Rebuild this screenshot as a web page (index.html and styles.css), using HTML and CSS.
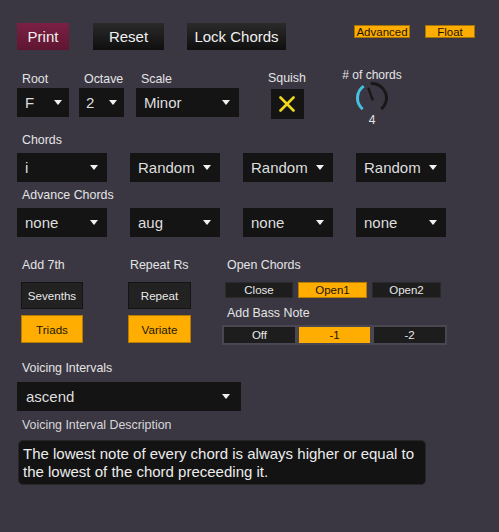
FILE: index.html
```html
<!DOCTYPE html>
<html>
<head>
<meta charset="utf-8">
<link rel="stylesheet" href="styles.css">
</head>
<body>
<div class="app">
  <div class="topbar">
    <div class="tbtn print">Print</div>
    <div class="tbtn dark reset">Reset</div>
    <div class="tbtn dark lock">Lock Chords</div>
    <div class="flags">
      <div class="flag adv">Advanced</div>
      <div class="flag flt">Float</div>
    </div>
  </div>

  <div class="params">
    <div class="col col-root">
      <div class="lbl">Root</div>
      <div class="dd"><span>F</span><i class="tri"></i></div>
    </div>
    <div class="col col-oct">
      <div class="lbl">Octave</div>
      <div class="dd"><span>2</span><i class="tri"></i></div>
    </div>
    <div class="col col-scale">
      <div class="lbl">Scale</div>
      <div class="dd"><span>Minor</span><i class="tri"></i></div>
    </div>
    <div class="col col-squish">
      <div class="lbl-c">Squish</div>
      <div class="squish">
        <svg width="16" height="16" viewBox="0 0 16 16"><path d="M1.5 1.5 L14.5 14.5 M14.5 1.5 L1.5 14.5" stroke="#f2d81c" stroke-width="2.6" stroke-linecap="round" fill="none"/></svg>
      </div>
    </div>
    <div class="col col-knob">
      <div class="lbl-k">#&nbsp;of chords</div>
      <svg class="knob" width="36" height="32" viewBox="0 0 36 32">
        <path d="M8.68 27.11 A14.5 14.5 0 0 1 9.68 4.12" stroke="#44c2e1" stroke-width="3" fill="none"/>
        <path d="M16.74 1.56 A14.5 14.5 0 0 1 27.32 27.11" stroke="#181818" stroke-width="3" fill="none"/>
        <path d="M18.4 17.4 L14.6 6.8" stroke="#181818" stroke-width="2.4" stroke-linecap="round"/>
      </svg>
      <div class="kval">4</div>
    </div>
  </div>

  <div class="lbl sec">Chords</div>
  <div class="ddrow">
    <div class="dd w90"><span>i</span><i class="tri"></i></div>
    <div class="dd w90"><span>Random</span><i class="tri"></i></div>
    <div class="dd w90"><span>Random</span><i class="tri"></i></div>
    <div class="dd w90"><span>Random</span><i class="tri"></i></div>
  </div>
  <div class="lbl sec2">Advance Chords</div>
  <div class="ddrow">
    <div class="dd w90"><span>none</span><i class="tri"></i></div>
    <div class="dd w90"><span>aug</span><i class="tri"></i></div>
    <div class="dd w90"><span>none</span><i class="tri"></i></div>
    <div class="dd w90"><span>none</span><i class="tri"></i></div>
  </div>

  <div class="opts">
    <div class="ocol o1">
      <div class="lbl">Add 7th</div>
      <div class="tog off first">Sevenths</div>
      <div class="tog on second">Triads</div>
    </div>
    <div class="ocol o2">
      <div class="lbl">Repeat Rs</div>
      <div class="tog off first">Repeat</div>
      <div class="tog on second">Variate</div>
    </div>
    <div class="ocol o3">
      <div class="lbl">Open Chords</div>
      <div class="seg">
        <div class="sbtn">Close</div>
        <div class="sbtn on">Open1</div>
        <div class="sbtn">Open2</div>
      </div>
      <div class="lbl bass-lbl">Add Bass Note</div>
      <div class="seg2">
        <div class="bbtn">Off</div>
        <div class="bbtn on">-1</div>
        <div class="bbtn">-2</div>
      </div>
    </div>
  </div>

  <div class="lbl vlbl">Voicing Intervals</div>
  <div class="dd voicing"><span>ascend</span><i class="tri"></i></div>
  <div class="lbl-s">Voicing Interval Description</div>
  <div class="desc">The lowest note of every chord is always higher or equal to the lowest of the chord preceeding it.</div>
</div>
</body>
</html>
```

FILE: styles.css
```css
* { box-sizing: border-box; }
html, body { margin: 0; padding: 0; }
body {
  background: #3a3743;
  width: 499px;
  height: 532px;
  overflow: hidden;
  font-family: "Liberation Sans", Arial, sans-serif;
  color: #e2e2e2;
}
.app { padding: 23px 24px 0 17px; }

.topbar { display: flex; align-items: flex-start; height: 27px; }
.tbtn {
  height: 27px;
  display: flex; align-items: center; justify-content: center;
  font-size: 15px; color: #f0f0f0;
}
.print { width: 52px; margin-right: 24px; background: linear-gradient(#7b2044, #5f1631); }
.dark { background: linear-gradient(#2a2a2a, #0f0f0f); }
.reset { width: 71px; margin-right: 23px; }
.lock { width: 99px; }
.flags { margin-left: auto; margin-top: 2px; display: flex; gap: 15px; }
.flag {
  height: 13px;
  background: #ffad00;
  border: 1px solid #a87400;
  color: #1a1400;
  font-size: 11.5px;
  display: flex; align-items: center; justify-content: center;
}
.adv { width: 56px; }
.flt { width: 50px; }

.lbl { font-size: 12.4px; line-height: 14px; padding-left: 5px; color: #e4e4e4; }
.params { display: flex; align-items: flex-start; margin-top: 22px; }
.col .lbl { margin-bottom: 2px; }
.dd {
  height: 29px;
  background: #141414;
  display: flex; align-items: center;
  padding: 0 9px 0 9px;
  font-size: 15px; color: #dedede;
}
.tri {
  margin-left: auto;
  width: 0; height: 0;
  border-left: 4.5px solid transparent;
  border-right: 4.5px solid transparent;
  border-top: 5px solid #f2f2f2;
}
.col-root { width: 52px; }
.col-root .dd { padding-left: 8px; padding-right: 7px; }
.col-oct { width: 45px; margin-left: 10px; }
.col-oct .dd { padding-left: 7px; padding-right: 7px; }
.col-scale { width: 103px; margin-left: 12px; }
.col-scale .dd { padding-left: 8px; }
.col-squish { width: 38px; margin-left: 29px; display: flex; flex-direction: column; align-items: center; margin-top: -1px; }
.lbl-c { font-size: 12.4px; line-height: 14px; color: #e4e4e4; }
.squish {
  margin-top: 4px;
  width: 33px; height: 30px;
  background: #141414;
  display: flex; align-items: center; justify-content: center;
}
.col-knob { width: 62px; margin-left: 35px; margin-top: -4px; display: flex; flex-direction: column; align-items: center; }
.lbl-k { font-size: 12px; line-height: 14px; color: #e4e4e4; white-space: nowrap; }
.knob { display: block; }
.kval { font-size: 12px; line-height: 12px; color: #e4e4e4; }

.sec { margin-top: 7px; }
.sec2 { margin-top: 6px; }
.ddrow { display: flex; gap: 23px; margin-top: 6px; }
.w90 { width: 90px; padding-left: 8px; }

.opts { display: flex; align-items: flex-start; margin-top: 21px; }
.ocol { display: flex; flex-direction: column; }
.o1 { width: 66px; }
.o1 .tog { margin-left: 4px; }
.o2 { margin-left: 45px; width: 63px; }
.o2 .lbl { padding-left: 2px; }
.o3 { margin-left: 31px; }
.tog {
  width: 62px;
  display: flex; align-items: center; justify-content: center;
  font-size: 11.6px;
  border: 1px solid #141414;
}
.o2 .tog { width: 63px; }
.tog.first { margin-top: 10px; height: 27px; }
.tog.second { margin-top: 6px; height: 28px; }
.tog.off { background: #222222; color: #e8e8e8; }
.tog.on { background: #ffad00; color: #201800; border-color: #b57c00; }

.seg { display: flex; gap: 5px; margin-top: 10px; margin-left: 3px; }
.sbtn {
  width: 69px; height: 16px;
  background: #1d1d1d;
  border: 1px solid #2a2a2a;
  display: flex; align-items: center; justify-content: center;
  font-size: 11.5px; color: #e8e8e8;
}
.sbtn:first-child { width: 68px; }
.sbtn.on { background: #ffad00; color: #1c1400; border-color: #b57c00; }
.bass-lbl { margin-top: 8px; }
.seg2 { display: flex; margin-top: 5px; }
.bbtn {
  width: 75px; height: 20px;
  background: #1d1d1d;
  border: 2px solid #4a4752;
  display: flex; align-items: center; justify-content: center;
  font-size: 11.5px; color: #e8e8e8;
}
.bbtn.on { background: #ffad00; color: #1c1400; }

.vlbl { margin-top: 16px; }
.voicing { width: 224px; margin-top: 7px; padding-left: 9px; padding-right: 11px; }
.lbl-s { font-size: 12.4px; line-height: 13px; padding-left: 5px; margin-top: 8px; color: #d8d8d8; }
.desc {
  margin-top: 8px; margin-left: 1px;
  width: 408px; height: 45px;
  background: #131313;
  border: 1px solid #262626;
  border-radius: 5px;
  padding: 4px 5px 0 4px;
  font-size: 15px; line-height: 18px; color: #ececec;
}
```
